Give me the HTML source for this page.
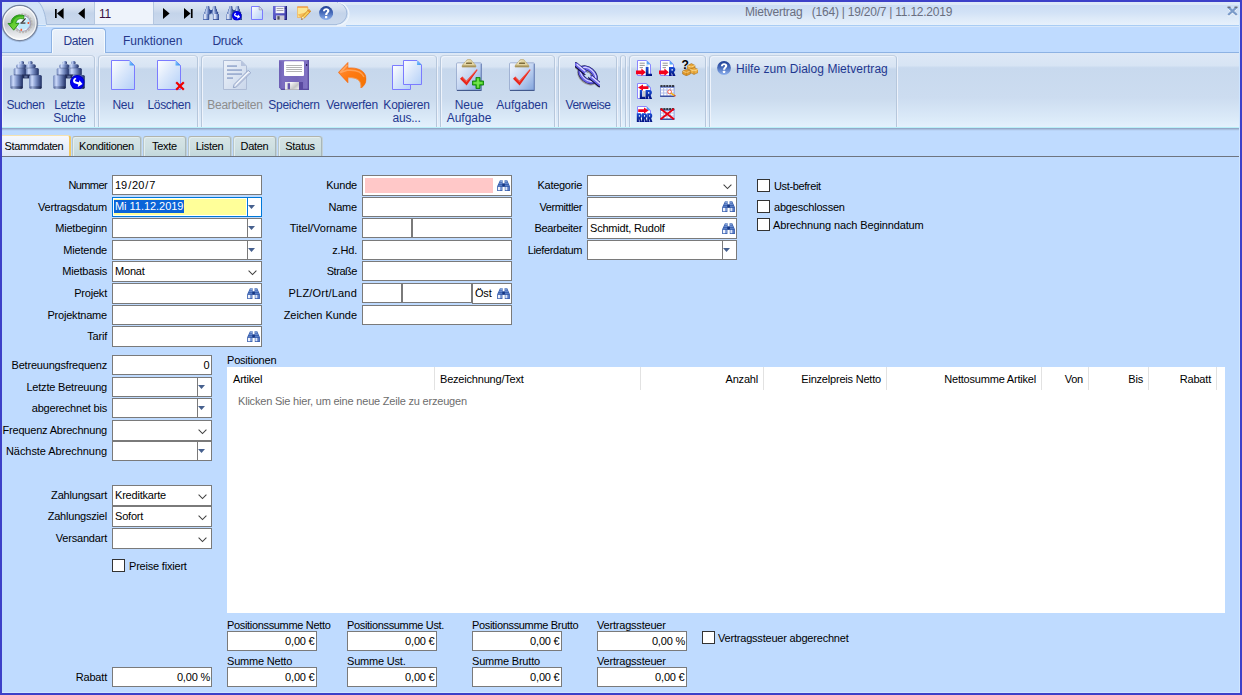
<!DOCTYPE html><html><head><meta charset="utf-8"><title>Mietvertrag</title><style>
*{box-sizing:border-box;margin:0;padding:0}
html,body{width:1242px;height:695px;overflow:hidden;background:#bfdbff}
body{font-family:"Liberation Sans",sans-serif;font-size:11px;color:#000;position:relative}
.a{position:absolute}
.t{position:absolute;white-space:nowrap;line-height:14px;height:14px;letter-spacing:-0.2px}
.r{text-align:right}
.c{text-align:center}
/* window frame */
#frame{left:0;top:0;width:1242px;height:695px;border:2px solid #3c40c8;z-index:50;pointer-events:none}
#frame2{left:2px;top:2px;width:1238px;height:691px;border:1px solid #cfe6ff;border-top:none;border-left:none;z-index:49}
/* title */
#title{left:2px;top:2px;width:1238px;height:23px;background:linear-gradient(#dde9f7 0,#dce8f7 12%,#cbddf4 14%,#d2e2f6 45%,#dfebf9 75%,#e7f1fc 100%)}
#titleline{left:2px;top:25px;width:1238px;height:2px;background:linear-gradient(#a9cdf4 0,#a9cdf4 50%,#d8e8fb 50%)}
.tt{font-size:12px;color:#6a6f80;letter-spacing:-0.23px}
/* ribbon tabs */
.rtab{font-size:12px;color:#25388a;line-height:16px;height:16px}
#tabact{left:51px;top:28px;width:55px;height:25px;border:1px solid #8db2e3;border-bottom:none;border-radius:4px 4px 0 0;background:linear-gradient(#eaf1fa,#e4edf8 50%,#dfe8f5);box-shadow:inset 1px 1px 0 #f4fafe, inset -1px 0 0 #f4fafe}
/* ribbon */
#ribbon{left:2px;top:52px;width:1238px;height:75px;background:linear-gradient(#dde8f6 0,#d7e4f4 17%,#c8d9ee 20%,#ccdcf0 60%,#dcebf9 90%,#e4f1fd 100%);border-top:1px solid #8db2e3}
#ribbot{left:2px;top:127px;width:1238px;height:4px;background:linear-gradient(#b9f0f8 0,#b9f0f8 25%,#94a8c8 25%,#94a8c8 50%,#a9bfe0 50%,#a9bfe0 75%,#b9d4f7 75%)}
.grp{position:absolute;top:55px;height:72px;border:1px solid #b6c7dc;border-top-color:#c3d1e2;border-bottom:none;border-radius:4px 4px 0 0;background:linear-gradient(#e0eaf6 0,#d8e4f3 15%,#c6d7ec 18.5%,#cbdbee 60%,#dbeaf8 88%,#e3f1fd 100%);box-shadow:inset 1px 1px 0 #eef3fb, 1px 0 0 #edf2fb}
.rl{font-size:12px;color:#1f3890;line-height:13px;text-align:center;position:absolute;white-space:nowrap}
.rl.dis{color:#8d8d8d}
/* page tabs */
.ptab{position:absolute;top:136px;height:20px;border:1px solid #a9b7b9;border-top-color:#b2b4ac;border-left-color:#b8c6c8;border-bottom:none;border-radius:3px 3px 0 0;background:linear-gradient(#d6e4e6,#cfe0e2 50%,#c3d8dc);font-size:11px;line-height:19px;text-align:center;letter-spacing:-0.3px;box-shadow:inset 1px 1px 0 #e3eeee, 1px 0 0 #c2d0d6}
.ptab.act{top:135px;height:21px;text-align:left;padding-left:2.6px;letter-spacing:-0.36px;background:linear-gradient(#f6f8fd,#eaf0fb 50%,#dde7f8);border:none;border-top:1px solid #f6e2b0;border-right:2px solid #f3c860;border-radius:0 3px 0 0;line-height:21px;z-index:3;box-shadow:none}
#pline{left:2px;top:156px;width:1238px;height:1px;background:#6e7580}
/* form */
.f{position:absolute;background:#fff;border:1px solid #7a7a7a}
.f.foc{border-color:#0078d7}
.f.foc .dd{background:#0078d7}
.dd{position:absolute;top:0;bottom:0;width:1px;background:#7a7a7a}
.cb{position:absolute;width:13px;height:13px;background:#fff;border:1px solid #333}
.gh{position:absolute;top:367px;height:23px;width:1px;background:#e2e2e2}
</style></head><body>

<svg width="0" height="0" style="position:absolute">
<defs>
 <linearGradient id="gSteel" x1="0" x2="1" y1="0" y2="0">
  <stop offset="0" stop-color="#6c82b6"/><stop offset="0.23" stop-color="#cddbfb"/><stop offset="0.52" stop-color="#8398cc"/><stop offset="0.85" stop-color="#3b4d84"/><stop offset="1" stop-color="#1d2c5e"/>
 </linearGradient>
 <linearGradient id="gSteelD" x1="0" x2="1" y1="0" y2="0">
  <stop offset="0" stop-color="#5b6c98"/><stop offset="0.25" stop-color="#93a5cf"/><stop offset="0.6" stop-color="#4d5e8c"/><stop offset="1" stop-color="#16224a"/>
 </linearGradient>
 <linearGradient id="gDoc" x1="0" x2="1" y1="0" y2="1">
  <stop offset="0" stop-color="#ffffff"/><stop offset="0.45" stop-color="#dbe8fb"/><stop offset="1" stop-color="#b3d0f8"/>
 </linearGradient>
 <linearGradient id="gDocD" x1="0" x2="1" y1="0" y2="1">
  <stop offset="0" stop-color="#eef3fa"/><stop offset="1" stop-color="#c9d6ea"/>
 </linearGradient>
 <linearGradient id="gFold" x1="0" x2="1" y1="0" y2="1">
  <stop offset="0" stop-color="#8fd0ff"/><stop offset="1" stop-color="#2f8cf0"/>
 </linearGradient>
 <linearGradient id="gClip" x1="0" x2="1" y1="0" y2="1">
  <stop offset="0" stop-color="#f4f7fd"/><stop offset="0.5" stop-color="#c3d5f2"/><stop offset="1" stop-color="#7fa2dc"/>
 </linearGradient>
 <linearGradient id="gOrange" x1="0" x2="1" y1="0" y2="1">
  <stop offset="0" stop-color="#ff9448"/><stop offset="0.45" stop-color="#ff7a12"/><stop offset="1" stop-color="#f27400"/>
 </linearGradient>
 <linearGradient id="gHelp" x1="0" x2="0" y1="0" y2="1">
  <stop offset="0" stop-color="#1f3f94"/><stop offset="0.45" stop-color="#4468b8"/><stop offset="1" stop-color="#8fb2ee"/>
 </linearGradient>
 <linearGradient id="gSteelS" x1="0" x2="1" y1="0" y2="0">
  <stop offset="0" stop-color="#5e7cba"/><stop offset="0.3" stop-color="#f4f6ff"/><stop offset="0.62" stop-color="#8aa2d6"/><stop offset="1" stop-color="#274088"/>
 </linearGradient>
 <linearGradient id="gSteelM" x1="0" x2="1" y1="0" y2="0">
  <stop offset="0" stop-color="#4f6cae"/><stop offset="0.3" stop-color="#c6d4f2"/><stop offset="0.6" stop-color="#6a84c0"/><stop offset="1" stop-color="#233a80"/>
 </linearGradient>
 <linearGradient id="gLet" x1="0" x2="0" y1="0" y2="1">
  <stop offset="0" stop-color="#1a50d8"/><stop offset="1" stop-color="#00107a"/>
 </linearGradient>
 <linearGradient id="gFlopL" x1="0" x2="1" y1="0" y2="0">
  <stop offset="0" stop-color="#6d5eb4"/><stop offset="0.12" stop-color="#7c6ec0"/><stop offset="0.6" stop-color="#7667ba"/><stop offset="1" stop-color="#8476c6"/>
 </linearGradient>
 <linearGradient id="gShut" x1="0" x2="1" y1="0" y2="1">
  <stop offset="0" stop-color="#ffffff"/><stop offset="0.6" stop-color="#c4c4c6"/><stop offset="1" stop-color="#f4f4f4"/>
 </linearGradient>
 <linearGradient id="gFlop" x1="0" x2="1" y1="0" y2="1">
  <stop offset="0" stop-color="#6a6ad8"/><stop offset="1" stop-color="#3c3caa"/>
 </linearGradient>
 <linearGradient id="gOrb" x1="0" x2="0" y1="0" y2="1">
  <stop offset="0" stop-color="#f6f7f9"/><stop offset="0.35" stop-color="#d6dade"/><stop offset="0.55" stop-color="#c2c6cc"/><stop offset="0.8" stop-color="#e2e4e7"/><stop offset="1" stop-color="#fbfbfb"/>
 </linearGradient>
 <linearGradient id="gGreen" x1="0" x2="1" y1="0" y2="1">
  <stop offset="0" stop-color="#35b21a"/><stop offset="0.6" stop-color="#6fd43a"/><stop offset="1" stop-color="#2a9a10"/>
 </linearGradient>

 <!-- big binoculars 32x32 -->
 <symbol id="binoL" viewBox="0 0 32 32">
  <rect x="9.6" y="2.9" width="4.4" height="3.6" rx="1.6" fill="url(#gSteel)"/>
  <rect x="18" y="2.9" width="4.6" height="3.6" rx="1.6" fill="url(#gSteel)"/>
  <rect x="6.2" y="6.2" width="10" height="4.2" rx="1.8" fill="url(#gSteel)"/>
  <rect x="15.8" y="6.2" width="10" height="4.2" rx="1.8" fill="url(#gSteel)"/>
  <rect x="3.7" y="10" width="12.6" height="7.6" rx="1.5" fill="url(#gSteel)"/>
  <rect x="15.8" y="10" width="13" height="7.6" rx="1.5" fill="url(#gSteel)"/>
  <rect x="12" y="16.6" width="8" height="3.8" fill="#1e2a55"/>
  <rect x="14.3" y="17.6" width="3.2" height="2.2" fill="#5c6c98"/>
  <rect x="0.2" y="17.1" width="12.7" height="13.6" rx="1.5" fill="url(#gSteel)"/>
  <rect x="19.1" y="17.1" width="12.7" height="13.6" rx="1.5" fill="url(#gSteel)"/>
  <rect x="0.8" y="28.2" width="11.6" height="2.6" rx="1" fill="url(#gSteelD)"/>
  <rect x="19.7" y="28.2" width="11.6" height="2.6" rx="1" fill="url(#gSteelD)"/>
  <rect x="3.7" y="16.4" width="25" height="1" fill="#33426f" opacity="0.55"/>
  <rect x="6.4" y="9.6" width="19.4" height="0.9" fill="#33426f" opacity="0.45"/>
 </symbol>
 <!-- blue round arrow badge 10x10 -->
 <symbol id="badge" viewBox="0 0 14 14">
  <circle cx="7" cy="7" r="6.9" fill="#0000f4"/><circle cx="7" cy="7" r="6.5" fill="none" stroke="#00008c" stroke-width="0.8" opacity="0.7"/>
  <path d="M5.2 2.6C2.6 3.4 2.2 6.6 4.4 8L8 9.2L7.4 11.4L12 8.6L9 5L8.6 7L5.6 6.2C4.4 5.6 4.6 4.2 6.2 3.8Z" fill="#fff"/>
 </symbol>
 <!-- small binoculars 16x16 -->
 <symbol id="bino16" viewBox="0 0 16 14">
  <rect x="3.1" y="0" width="3.3" height="3.6" rx="0.9" fill="url(#gSteelM)"/>
  <rect x="9.8" y="0" width="3.3" height="3.6" rx="0.9" fill="url(#gSteelM)"/>
  <rect x="2.2" y="2.8" width="4.9" height="3.2" rx="0.8" fill="url(#gSteelM)"/>
  <rect x="9.1" y="2.8" width="4.9" height="3.2" rx="0.8" fill="url(#gSteelM)"/>
  <rect x="6.8" y="4" width="2.6" height="3.4" fill="#2e4a94"/>
  <rect x="1.3" y="5.4" width="6.3" height="3.2" rx="0.8" fill="url(#gSteelM)"/>
  <rect x="8.8" y="5.4" width="6.3" height="3.2" rx="0.8" fill="url(#gSteelM)"/>
  <rect x="0" y="8" width="6.2" height="6" rx="0.7" fill="url(#gSteelS)"/>
  <rect x="9.9" y="8" width="6.2" height="6" rx="0.7" fill="url(#gSteelS)"/>
  <rect x="0.2" y="13" width="5.8" height="1" fill="#3b59a6" opacity="0.8"/><rect x="10.1" y="13" width="5.8" height="1" fill="#2a4590" opacity="0.8"/>
 </symbol>
 <!-- tiny field binoculars 13x11 -->
 <symbol id="binoS" viewBox="0 0 13 11">
  <path d="M3 0.2H5.6V3.4H7.6V0.2H10.2L12.9 6.2V10.9H7.8V6.8H5.4V10.9H0.2V6.2Z" fill="#2f57a8"/>
  <rect x="3.2" y="0.4" width="2.2" height="1.4" fill="#9fb9e6"/><rect x="7.9" y="0.4" width="2.2" height="1.4" fill="#86a4da"/>
  <path d="M2.6 2.6H5.2V3.8H2.1ZM7.9 2.6H10.6L11.1 3.8H7.9Z" fill="#7f9fdc"/>
  <path d="M1.7 4.8H5.2V5.8H1.2ZM7.9 4.8H11.5L12 5.8H7.9Z" fill="#6a8cd0"/>
  <rect x="5.5" y="3.6" width="2.2" height="3" fill="#173680"/>
  <rect x="0.9" y="6.8" width="4" height="3.5" fill="#7f9cd6"/><rect x="8.3" y="6.8" width="4" height="3.5" fill="#5c7cc4"/>
  <rect x="1" y="6.9" width="2.1" height="3.3" fill="#eef2fc"/><rect x="8.4" y="6.9" width="1.9" height="3.3" fill="#dde6f8"/>
 </symbol>
 <!-- document 24x30 -->
 <symbol id="doc" viewBox="0 0 24 30">
  <path d="M0.5 0.5H18.5L23.5 5.5V29.5H0.5Z" fill="url(#gDoc)" stroke="#7b7bff" stroke-width="1"/>
  <path d="M18.5 0.5L23.5 5.5H18.5Z" fill="url(#gFold)"/>
 </symbol>
 <symbol id="doc16" viewBox="0 0 12 14">
  <path d="M0.5 0.5H8.2L11.5 3.8V13.5H0.5Z" fill="url(#gDoc)" stroke="#7b7bff" stroke-width="1"/>
  <path d="M8.2 0.5V3.8H11.5Z" fill="#e8eefa" stroke="#8e8ea8" stroke-width="0.7"/>
 </symbol>
 <symbol id="redx" viewBox="0 0 10 10">
  <path d="M1.2 1.2L8.8 8.8M8.8 1.2L1.2 8.8" stroke="#f00000" stroke-width="2.2" stroke-linecap="butt"/>
 </symbol>
 <!-- edit (disabled) 28x30 -->
 <symbol id="edit" viewBox="0 0 28 30">
  <path d="M0.5 0.5H18L23.5 6V29.5H0.5Z" fill="url(#gDocD)" stroke="#aebcd6" stroke-width="1"/>
  <path d="M18 0.5V6H23.5Z" fill="#b7c4de"/>
  <rect x="4" y="5.2" width="10" height="1.8" fill="#9fb0d2"/><rect x="4" y="9.2" width="15" height="1.8" fill="#9fb0d2"/>
  <rect x="4" y="13.2" width="15" height="1.8" fill="#9fb0d2"/><rect x="4" y="17.2" width="6" height="1.8" fill="#9fb0d2"/>
  <path d="M25.2 10.4L27.6 12.8L13.6 26.8L10.4 27.6L11.2 24.4Z" fill="#eef2f9" stroke="#8e9fc4" stroke-width="1"/>
  <path d="M12.4 24.6L13.4 25.6L25.8 13.2" fill="none" stroke="#b9c6e0" stroke-width="0.9"/>
 </symbol>
 <!-- floppy 30x30 -->
 <symbol id="floppy" viewBox="0 0 30 30">
  <path d="M0 0H30V30H2.5L0 27.5Z" fill="url(#gFlopL)"/>
  <path d="M0 0H30V1.2H0Z" fill="#8a7cc8"/><path d="M28.6 0H30V30H28.6Z" fill="#5e4fa4"/><path d="M1 28.8H30V30H2.5Z" fill="#594a9e"/>
  <rect x="5" y="1.2" width="20" height="14.8" rx="1" fill="#fff"/>
  <rect x="7.2" y="5" width="15.8" height="1" fill="#b4b4b4"/><rect x="7.2" y="7" width="15.8" height="1" fill="#b4b4b4"/>
  <rect x="7.2" y="9" width="15.8" height="1" fill="#b4b4b4"/><rect x="7.2" y="11" width="15.8" height="1" fill="#b4b4b4"/>
  <rect x="27" y="4" width="1.2" height="2" fill="#2a2060"/>
  <rect x="6" y="22" width="18" height="8" fill="#5a4aa0"/>
  <rect x="6" y="22" width="14" height="8" fill="#e9e9ec"/><rect x="8.6" y="23.2" width="2.6" height="6.8" fill="#6454ac"/>
  <path d="M11.2 22H20V29.4H11.2Z" fill="url(#gShut)"/><rect x="6" y="29.2" width="14" height="0.8" fill="#b0b0b4"/>
 </symbol>
 <symbol id="floppy16" viewBox="0 0 14 14">
  <path d="M0 0H14V14H1.2L0 12.8Z" fill="url(#gFlop)"/>
  <path d="M12.8 0H14V14H12.8Z" fill="#24247e"/><path d="M0.6 13H14V14H1.2Z" fill="#24247e"/>
  <rect x="2.6" y="0.6" width="8.8" height="6.6" fill="#f4f4fa"/>
  <rect x="3.6" y="2" width="6.8" height="0.9" fill="#9a9aa8"/><rect x="3.6" y="4" width="6.8" height="0.9" fill="#9a9aa8"/>
  <rect x="3" y="9.4" width="8.4" height="4.6" fill="#c8c8d4"/><rect x="4.4" y="10.2" width="2.2" height="3.4" fill="#4a4a58"/>
  <rect x="11.8" y="1.6" width="0.8" height="1.4" fill="#1a1a60"/>
 </symbol>
 <!-- undo 30x28 -->
 <symbol id="undo" viewBox="0 0 30 28">
  <path d="M10.4 0.5V6.4C20 5.4 29.6 9 29.6 18C29.6 22.4 27 25.6 24 27.8C25 21.6 22.6 15.8 10.4 16.4V21.8L0.4 11Z" fill="url(#gOrange)" stroke="#f4650a" stroke-width="0.7" stroke-linejoin="round"/>
  <path d="M10 3.2L2.4 11.2L9.6 8.8C18 8 25 10.4 27.4 15.6" fill="none" stroke="#ffc08a" stroke-width="1.6" opacity="0.55"/>
  <path d="M10.4 16.4C22.6 15.8 25 21.6 24 27.8" fill="none" stroke="#f8b070" stroke-width="0.9" opacity="0.7"/>
 </symbol>
 <!-- copy 30x30 -->
 <symbol id="copy" viewBox="0 0 30 30">
  <path d="M0.5 5.5H18.5V29.5H0.5Z" fill="url(#gDoc)" stroke="#7b7bff" stroke-width="1"/>
  <path d="M11.5 0.5H25L29.5 5V24.5H11.5Z" fill="url(#gDoc)" stroke="#7b7bff" stroke-width="1"/>
  <path d="M25 0.5L29.5 5H25Z" fill="url(#gFold)"/>
 </symbol>
 <!-- clipboard check 26x32 -->
 <symbol id="clip" viewBox="0 0 26 32">
  <rect x="0.5" y="3.8" width="25" height="28" rx="1.2" fill="url(#gClip)" stroke="#93a6ca" stroke-width="0.8"/>
  <path d="M1 31.4H25.4" stroke="#3f5588" stroke-width="1.1"/><path d="M25.2 5V31.4" stroke="#5d77b0" stroke-width="0.9"/>
  <path d="M6 8C6 5.4 8.8 3.8 9.8 2.4C10.6 1 11.4 0.3 13 0.3C14.6 0.3 15.4 1 16.2 2.4C17.2 3.8 20 5.4 20 8Z" fill="#e2d4a2" stroke="#b09c62" stroke-width="0.6"/>
  <path d="M8.2 4.6C9.6 3.6 10.4 1.6 13 1.4C11.6 2.4 10.4 4.2 8.2 4.6Z" fill="#f6eed2"/>
  <rect x="10" y="3.4" width="6" height="1.5" rx="0.5" fill="#7d6c3c"/>
  <rect x="6.2" y="6.4" width="13.6" height="1.7" fill="#a8945a"/>
  <path d="M4 19.8L6.4 17.6L10.4 21.8L20.8 10.2L21.6 11L10.6 26.4Z" fill="#e8251c"/>
  <path d="M6.2 18.4L10.4 22.8L20.6 10.8" fill="none" stroke="#ff8a78" stroke-width="0.7" opacity="0.8"/>
 </symbol>
 <symbol id="plus" viewBox="0 0 12 12">
  <path d="M4 0.4H8V4H11.6V8H8V11.6H4V8H0.4V4H4Z" fill="#3cc41e" stroke="#0c7e08" stroke-width="0.9"/>
  <path d="M5.2 1.6H6.8V5.2H10.4V6.8H6.8V10.4H5.2V6.8H1.6V5.2H5.2Z" fill="#84ec5c" opacity="0.85"/>
 </symbol>
 <!-- chain 26x26 -->
 <symbol id="chain" viewBox="0 0 26 26">
  <g transform="rotate(40 13 13)">
   <g transform="translate(0.4 1.4)" opacity="0.5" fill="none" stroke="#6a5a48">
    <ellipse cx="13" cy="13" rx="9" ry="5.6" stroke-width="4.6"/>
    <path d="M-3 13H9M17 13H29" stroke-width="3.6" stroke-linecap="round"/>
   </g>
   <ellipse cx="13" cy="13" rx="9" ry="5.6" fill="none" stroke="#15155a" stroke-width="4.8"/>
   <ellipse cx="13" cy="13" rx="9" ry="5.6" fill="none" stroke="#6a64e6" stroke-width="3.6"/>
   <ellipse cx="13" cy="12.5" rx="9" ry="5.6" fill="none" stroke="#d6d4ff" stroke-width="1.2"/>
   <path d="M-3 13H9" stroke="#0c0c40" stroke-width="5" stroke-linecap="round"/>
   <path d="M-3 12.6H9" stroke="#6a64e6" stroke-width="3.6" stroke-linecap="round"/>
   <path d="M-2.6 12H8.6" stroke="#e0deff" stroke-width="1.3"/>
   <path d="M17 13H29" stroke="#0c0c40" stroke-width="5" stroke-linecap="round"/>
   <path d="M17 12.6H29" stroke="#6a64e6" stroke-width="3.6" stroke-linecap="round"/>
   <path d="M17.4 12H28.6" stroke="#e0deff" stroke-width="1.3"/>
   <path d="M9.6 13H16.4" stroke="#c9dcf2" stroke-width="2.4"/>
  </g>
 </symbol>
 <!-- help 14x14 -->
 <symbol id="help" viewBox="0 0 14 14">
  <circle cx="7" cy="7" r="6.9" fill="url(#gHelp)"/>
  <path d="M3.9 5.2C3.9 3.2 5.4 2.2 7.1 2.2C8.9 2.2 10.3 3.2 10.3 4.8C10.3 6.8 8.2 7 8.1 8.8H6C6 6.6 8 6.2 8 5C8 4.4 7.6 4 7 4C6.4 4 6 4.4 5.9 5.2Z" fill="#fff"/>
  <rect x="5.9" y="9.8" width="2.3" height="2.2" rx="0.4" fill="#fff"/>
 </symbol>
 <!-- note + pencil 14x14 -->
 <symbol id="note" viewBox="0 0 14 14">
  <path d="M0.3 1H10.8V8.2L6.6 11.4H0.3Z" fill="#fbe694" stroke="#f0a848" stroke-width="0.7"/>
  <path d="M0.3 1H10.8" stroke="#f08a30" stroke-width="1"/>
  <path d="M0.6 8.6L3.4 11.2H6.6L10.6 8.2V6Z" fill="#f4b44e" opacity="0.85"/>
  <path d="M11.8 3.4L13.8 5.2L7.2 12.2L4.4 13.6L5.2 10.6Z" fill="#f6cf5a" stroke="#c47a18" stroke-width="0.7"/>
  <path d="M11 4.4L13 6.2" stroke="#e8842a" stroke-width="1.2"/>
  <path d="M4.4 13.6L5.2 10.6L7.2 12.2Z" fill="#f8ead0"/><path d="M4.4 13.6L4.9 12.2L5.8 12.9Z" fill="#222"/>
 </symbol>
 <!-- small ribbon icons -->
 <symbol id="docL" viewBox="0 0 17 16">
  <path d="M1.5 0.5H10.6L14.5 4.4V15.5H1.5Z" fill="#fff" stroke="#8a86ff" stroke-width="1"/>
  <path d="M10.6 0.5L14.5 4.4H10.6Z" fill="#58a8f4"/>
  <path d="M3.6 3.2H8.8M3.6 5.4H8.8M3.6 7.6H7" stroke="#8a8a8a" stroke-width="0.9"/>
  <path d="M11 5V15" stroke="#d6e6fa" stroke-width="2.4"/>
  <path d="M0 10.4H5.4V8.6L9.8 12.3L5.4 16V14.2H0Z" fill="#f4001c"/>
  <path transform="translate(9.8 7)" d="M0 0H2.7V6.7H6.2V9H0Z" fill="url(#gLet)"/>
 </symbol>
 <symbol id="docR1" viewBox="0 0 17 16">
  <path d="M1.5 0.5H10.6L14.5 4.4V15.5H1.5Z" fill="#fff" stroke="#8a86ff" stroke-width="1"/>
  <path d="M10.6 0.5L14.5 4.4H10.6Z" fill="#58a8f4"/>
  <path d="M3.6 3.2H8.8M3.6 5.4H8.8M3.6 7.6H7" stroke="#8a8a8a" stroke-width="0.9"/>
  <path d="M0 10.4H5.4V8.6L9.8 12.3L5.4 16V14.2H0Z" fill="#f4001c"/>
  <path transform="translate(10 7)" fill-rule="evenodd" d="M0 0H4.1C5.6 0 6.3 1 6.3 2.5C6.3 3.7 5.8 4.5 4.9 4.9L6.5 9H3.9L2.6 5.4V9H0ZM2.6 1.9V3.7H3.3C4 3.7 4 1.9 3.3 1.9Z" fill="url(#gLet)"/>
 </symbol>
 <symbol id="docR" viewBox="0 0 17 16">
  <path d="M1.5 0.5H10.6L14.5 4.4V15.5H1.5Z" fill="#fff" stroke="#8a86ff" stroke-width="1"/>
  <path d="M10.6 0.5L14.5 4.4H10.6Z" fill="#58a8f4"/>
  <path d="M7 9H10M7 11H10M7 13H10" stroke="#8a8a8a" stroke-width="0.9"/>
  <path d="M12.4 3.2H7V1.4L2 4.6L7 7.8V6H12.4Z" fill="#f4001c"/>
  <path transform="translate(3.8 7) scale(0.9 1)" d="M0 0H2.7V6.7H6.2V9H0Z" fill="url(#gLet)"/>
  <path transform="translate(9.6 7)" fill-rule="evenodd" d="M0 0H4.1C5.6 0 6.3 1 6.3 2.5C6.3 3.7 5.8 4.5 4.9 4.9L6.5 9H3.9L2.6 5.4V9H0ZM2.6 1.9V3.7H3.3C4 3.7 4 1.9 3.3 1.9Z" fill="url(#gLet)"/>
 </symbol>
 <symbol id="docRRR" viewBox="0 0 17 16">
  <path d="M1.5 0.5H10.6L14.5 4.4V15.5H1.5Z" fill="#fff" stroke="#8a86ff" stroke-width="1"/>
  <path d="M10.6 0.5L14.5 4.4H10.6Z" fill="#58a8f4"/>
  <path d="M2.2 3.2H8V1.6L12.6 4.6L8 7.6V6H2.2Z" fill="#f4001c"/>
  <path transform="translate(0.8 7.2) scale(0.8 0.98)" fill-rule="evenodd" d="M0 0H4.1C5.6 0 6.3 1 6.3 2.5C6.3 3.7 5.8 4.5 4.9 4.9L6.5 9H3.9L2.6 5.4V9H0ZM2.6 1.9V3.7H3.3C4 3.7 4 1.9 3.3 1.9Z" fill="url(#gLet)"/>
  <path transform="translate(6 7.2) scale(0.8 0.98)" fill-rule="evenodd" d="M0 0H4.1C5.6 0 6.3 1 6.3 2.5C6.3 3.7 5.8 4.5 4.9 4.9L6.5 9H3.9L2.6 5.4V9H0ZM2.6 1.9V3.7H3.3C4 3.7 4 1.9 3.3 1.9Z" fill="url(#gLet)"/>
  <path transform="translate(11.2 7.2) scale(0.8 0.98)" fill-rule="evenodd" d="M0 0H4.1C5.6 0 6.3 1 6.3 2.5C6.3 3.7 5.8 4.5 4.9 4.9L6.5 9H3.9L2.6 5.4V9H0ZM2.6 1.9V3.7H3.3C4 3.7 4 1.9 3.3 1.9Z" fill="url(#gLet)"/>
 </symbol>
 <symbol id="cal" viewBox="0 0 15 12">
  <rect x="0.5" y="1.6" width="13.6" height="9.6" fill="#fff" stroke="#8ea0dc" stroke-width="1"/>
  <path d="M0.4 1H14.2" stroke="#0a0a0a" stroke-width="1.3" stroke-dasharray="2.2 0.7"/>
  <path d="M0.4 2.4H14.2" stroke="#4a64c0" stroke-width="0.8"/>
  <path d="M0.5 5H14M0.5 8H14M3.7 2.4V11M7 2.4V11M10.3 2.4V11" stroke="#a8b6e6" stroke-width="0.9"/>
  <path d="M0.2 11.2H14.4" stroke="#1a2e8a" stroke-width="1.1"/>
 </symbol>
 <symbol id="boxes" viewBox="0 0 16 16">
  <path d="M5.4 5.6L9.4 3.6L13 5.4V9L9 10.8L5.4 9Z" fill="#e9a838" stroke="#9a6010" stroke-width="0.5"/>
  <path d="M5.4 5.6L9 7.2L13 5.4" fill="none" stroke="#fbe0a0" stroke-width="0.8"/><path d="M9 7.2V10.8" stroke="#b87818" stroke-width="0.6"/>
  <path d="M0.6 11L4.6 9.2L8.4 11V14L4.4 15.8L0.6 14Z" fill="#e29a2c" stroke="#9a6010" stroke-width="0.5"/>
  <path d="M0.6 11L4.4 12.6L8.4 11" fill="none" stroke="#f8d890" stroke-width="0.8"/><path d="M4.4 12.6V15.8" stroke="#b87818" stroke-width="0.6"/>
  <path d="M8.2 9.4L12.2 7.6L16 9.4V12.6L12 14.4L8.2 12.6Z" fill="#eeb044" stroke="#9a6010" stroke-width="0.5"/>
  <path d="M8.2 9.4L12 11L16 9.4" fill="none" stroke="#fbe0a0" stroke-width="0.8"/><path d="M12 11V14.4" stroke="#b87818" stroke-width="0.6"/>
 </symbol>
</defs>
</svg>

<div class="a" id="title"></div><div class="a" id="titleline"></div>
<svg class="a" style="left:0;top:0" width="360" height="30" viewBox="0 0 360 30">
<defs><linearGradient id="gQat" x1="0" x2="0" y1="0" y2="1"><stop offset="0" stop-color="#e1e9f5"/><stop offset="0.35" stop-color="#cfdcee"/><stop offset="0.5" stop-color="#c4d4ea"/><stop offset="1" stop-color="#cbdaee"/></linearGradient></defs>
<rect x="46" y="25" width="300" height="2" fill="#e4eefa"/>
<path d="M2 2H39C43 6 45.5 15 46.8 24.6H2Z" fill="#d2e3f8"/>
<path d="M38.6 2C43 6.5 45.5 15 46.6 24.6H336A11.3 11.3 0 0 0 336 2Z" fill="url(#gQat)"/>
<path d="M38.6 2C43 6.5 45.5 15 46.6 24.6H336A11.3 11.3 0 0 0 337 2.1" fill="none" stroke="#a3bbdc" stroke-width="1"/>
<path d="M338 2.6A11 11 0 0 1 337 25.4" fill="none" stroke="#f2f7fd" stroke-width="1.2" opacity="0.9"/>
<rect x="94.5" y="2" width="59" height="22.2" fill="#eef3fb"/>
<path d="M94.5 2V24M153.5 2V24" stroke="#b5c7e0" stroke-width="1"/>
</svg>
<div class="t tt" style="left:745px;top:5px">Mietvertrag&nbsp;&nbsp; (164) | 19/20/7 | 11.12.2019</div>
<div class="t" style="left:99px;top:7px;font-size:12px;color:#3a1040">11</div>
<div class="t rtab" style="left:123px;top:33px;letter-spacing:0px">Funktionen</div>
<div class="t rtab" style="left:212.5px;top:33px;letter-spacing:-0.3px">Druck</div>
<div class="a" id="ribbon"></div>
<div class="grp" style="left:2px;width:93px;border-left:none;border-radius:0 4px 0 0;"></div>
<div class="grp" style="left:98px;width:100px;"></div>
<div class="grp" style="left:201px;width:236px;"></div>
<div class="grp" style="left:440px;width:115px;"></div>
<div class="grp" style="left:558px;width:59px;"></div>
<div class="grp" style="left:620px;width:6px;"></div>
<div class="grp" style="left:629px;width:77px;"></div>
<div class="grp" style="left:709px;width:188px;"></div>
<div class="a" id="ribbot"></div>
<div class="a" id="tabact"></div>
<div class="t rtab" style="left:63.5px;top:33px;letter-spacing:-0.4px">Daten</div>
<div class="rl" style="left:25.5px;top:99.3px;width:100px;margin-left:-50px;letter-spacing:-0.45px;">Suchen</div>
<div class="rl" style="left:69.5px;top:99.3px;width:100px;margin-left:-50px;letter-spacing:-0.35px;">Letzte<br>Suche</div>
<div class="rl" style="left:123px;top:99.3px;width:100px;margin-left:-50px;letter-spacing:-0.3px;">Neu</div>
<div class="rl" style="left:169px;top:99.3px;width:100px;margin-left:-50px;letter-spacing:-0.32px;">L&ouml;schen</div>
<div class="rl dis" style="left:235px;top:99.3px;width:100px;margin-left:-50px;letter-spacing:-0.27px;">Bearbeiten</div>
<div class="rl" style="left:294px;top:99.3px;width:100px;margin-left:-50px;letter-spacing:-0.3px;">Speichern</div>
<div class="rl" style="left:352px;top:99.3px;width:100px;margin-left:-50px;letter-spacing:-0.27px;">Verwerfen</div>
<div class="rl" style="left:406.5px;top:99.3px;width:100px;margin-left:-50px;letter-spacing:-0.22px;">Kopieren<br>aus...</div>
<div class="rl" style="left:469px;top:99.3px;width:100px;margin-left:-50px;letter-spacing:0px;">Neue<br>Aufgabe</div>
<div class="rl" style="left:522px;top:99.3px;width:100px;margin-left:-50px;letter-spacing:0px;">Aufgaben</div>
<div class="rl" style="left:588px;top:99.3px;width:100px;margin-left:-50px;letter-spacing:-0.47px;">Verweise</div>
<div class="rl" style="left:736px;top:62.5px;text-align:left;letter-spacing:0.04px">Hilfe zum Dialog Mietvertrag</div>
<svg class="a" style="left:0px;top:3px" width="40" height="40" viewBox="0 0 40 40">
 <circle cx="19.8" cy="20.6" r="18.6" fill="#5f6f8c" opacity="0.28"/>
 <circle cx="19.7" cy="20" r="17.6" fill="url(#gOrb)" stroke="#76849e" stroke-width="1.2"/>
 <circle cx="19.7" cy="20" r="16.2" fill="none" stroke="#fff" stroke-width="1.1" opacity="0.8"/>
 <circle cx="22.6" cy="20.3" r="9.2" fill="none" stroke="#b4b0a8" stroke-width="1.6" stroke-dasharray="2.2 1" opacity="0.75"/>
 <circle cx="22.8" cy="20.3" r="8" fill="#b8b4d4" stroke="#9a98a8" stroke-width="0.8"/>
 <circle cx="22.8" cy="20.2" r="6.9" fill="#bfe9fb"/>
 <path d="M16.4 18.4A6.9 6.9 0 0 1 27.6 15.2L22.8 20.2Z" fill="#f2fbff"/>
 <path d="M16 21.4A6.9 6.9 0 0 0 27 25.6" fill="none" stroke="#e8f8ff" stroke-width="1.2"/>
 <path d="M21.4 20L25.6 15.4" stroke="#3a3a3a" stroke-width="1.4"/><path d="M20.4 20.1H25.4" stroke="#555" stroke-width="1.5"/>
 <rect x="27.6" y="19" width="1.6" height="2" fill="#f4582e"/><rect x="20.5" y="25.8" width="1.6" height="2" fill="#f4582e"/>
 <path d="M24 12.7C17.6 10.4 11 14 11 20.6L8 20.4L13.7 27.2L19 20.3L15.9 20.5C15.8 17 19 14.6 23.6 16Z" fill="url(#gGreen)" stroke="#138408" stroke-width="0.8"/>
 <path d="M22.6 13.2C17.4 12.2 12.6 15 12.3 20" fill="none" stroke="#0f8a06" stroke-width="1.2" opacity="0.55"/>
</svg>
<svg class="a" style="left:54.8px;top:8px" width="9" height="11" viewBox="0 0 9 11"><path d="M0 1H1.7V10H0ZM8.6 0V11L2 5.5Z" fill="#000"/></svg>
<svg class="a" style="left:77.5px;top:8px" width="7" height="11" viewBox="0 0 7 11"><path d="M6.8 0V11L0.2 5.5Z" fill="#000"/></svg>
<svg class="a" style="left:162.6px;top:8px" width="7" height="11" viewBox="0 0 7 11"><path d="M0 0L6.6 5.5L0 11Z" fill="#000"/></svg>
<svg class="a" style="left:183.8px;top:8px" width="9" height="11" viewBox="0 0 9 11"><path d="M0 0L6.6 5.5L0 11ZM6.9 1H8.6V10H6.9Z" fill="#000"/></svg>
<svg class="a" style="left:203px;top:6px;" width="16" height="14"><use href="#bino16"/></svg>
<svg class="a" style="left:226px;top:6px;" width="16" height="14"><use href="#bino16"/></svg>
<svg class="a" style="left:232px;top:11px;" width="9.6" height="9.6"><use href="#badge"/></svg>
<svg class="a" style="left:251px;top:6px;" width="12" height="14"><use href="#doc16"/></svg>
<svg class="a" style="left:273px;top:6px;" width="14" height="14"><use href="#floppy16"/></svg>
<svg class="a" style="left:296.5px;top:6px;" width="14" height="14"><use href="#note"/></svg>
<svg class="a" style="left:319px;top:5.8px;" width="14.2" height="14.2"><use href="#help"/></svg>
<svg class="a" style="left:1227px;top:6px" width="11" height="11" viewBox="0 0 11 11"><path d="M1.2 2L9.8 10M9.8 2L1.2 10" stroke="#fff" stroke-width="2.2" opacity="0.9"/><path d="M1.2 1.2L9.8 9M9.8 1.2L1.2 9" stroke="#7b9bc9" stroke-width="2.3"/><path d="M0.4 1.2H3.6M7.4 1.2H10.6" stroke="#5e5e62" stroke-width="1"/></svg>
<svg class="a" style="left:10px;top:58px;" width="32" height="32"><use href="#binoL"/></svg>
<svg class="a" style="left:53px;top:58px;" width="32" height="32"><use href="#binoL"/></svg>
<svg class="a" style="left:70.2px;top:74.9px;" width="14.6" height="14.6"><use href="#badge"/></svg>
<svg class="a" style="left:111px;top:60px;" width="24" height="30"><use href="#doc"/></svg>
<svg class="a" style="left:157px;top:60px;" width="24" height="30"><use href="#doc"/></svg>
<svg class="a" style="left:174.6px;top:80.6px;" width="10" height="10"><use href="#redx"/></svg>
<svg class="a" style="left:223px;top:60px;" width="28" height="30"><use href="#edit"/></svg>
<svg class="a" style="left:279px;top:60px;" width="30" height="30"><use href="#floppy"/></svg>
<svg class="a" style="left:338px;top:61.5px;" width="28.5" height="26.6"><use href="#undo"/></svg>
<svg class="a" style="left:392px;top:60px;" width="30" height="30"><use href="#copy"/></svg>
<svg class="a" style="left:456.2px;top:58.7px;" width="26" height="32"><use href="#clip"/></svg>
<svg class="a" style="left:472px;top:77px;" width="12" height="12"><use href="#plus"/></svg>
<svg class="a" style="left:509.2px;top:58.7px;" width="26" height="32"><use href="#clip"/></svg>
<svg class="a" style="left:574.5px;top:62.2px;" width="25.6" height="25.6"><use href="#chain"/></svg>
<svg class="a" style="left:717px;top:61px;" width="14" height="14"><use href="#help"/></svg>
<svg class="a" style="left:636px;top:60px;" width="17" height="16"><use href="#docL"/></svg>
<svg class="a" style="left:659px;top:60px;" width="17" height="16"><use href="#docR1"/></svg>
<svg class="a" style="left:682px;top:60px;" width="16" height="16"><use href="#boxes"/></svg>
<div class="t" style="left:681.4px;top:59px;font-weight:bold;font-size:12px;line-height:12px;height:12px;color:#000;letter-spacing:0">?</div>
<svg class="a" style="left:636px;top:83px;" width="17" height="16"><use href="#docR"/></svg>
<svg class="a" style="left:660px;top:84.6px;" width="15" height="12"><use href="#cal"/></svg>
<svg class="a" style="left:667px;top:88.6px" width="9" height="8" viewBox="0 0 9 8"><circle cx="2.6" cy="2.8" r="1.9" fill="#fff" stroke="#f0503c" stroke-width="0.9"/><path d="M4 4.2L8 7" stroke="#f0b018" stroke-width="1.6"/><path d="M7.2 6.4L8.4 7.2" stroke="#d04040" stroke-width="1.4"/></svg>
<svg class="a" style="left:636px;top:106px;" width="17" height="16"><use href="#docRRR"/></svg>
<svg class="a" style="left:660px;top:107.6px;" width="15" height="12"><use href="#cal"/></svg>
<svg class="a" style="left:660px;top:107.6px" width="15" height="12" viewBox="0 0 15 12"><path d="M0.6 0.8L14 11.2M14 0.8L0.6 11.2" stroke="#e80014" stroke-width="1.9"/></svg>
<div class="ptab act" style="left:2px;width:69px">Stammdaten</div>
<div class="ptab" style="left:72px;width:69px">Konditionen</div>
<div class="ptab" style="left:143px;width:43px">Texte</div>
<div class="ptab" style="left:188px;width:43px">Listen</div>
<div class="ptab" style="left:233px;width:43px">Daten</div>
<div class="ptab" style="left:278px;width:44px">Status</div>
<div class="a" id="pline"></div>
<div class="f " style="left:112px;top:175px;width:150px;height:20px"><div class="t" style="left:2px;top:2px"><span style="letter-spacing:0">19<span style="padding:0 0.9px">/</span>20<span style="padding:0 0.9px">/</span>7</span></div></div>
<div class="t r" style="left:-93px;width:200px;top:178px;letter-spacing:-0.6px;">Nummer</div>
<div class="f foc" style="left:112px;top:197px;width:150px;height:20px"><div class="dd" style="right:13px"></div><svg class="a" style="right:6px;top:7px" width="7" height="4" viewBox="0 0 7 4"><path d="M0 0H7L3.5 4Z" fill="#46608e"/></svg><div class="a" style="left:1px;top:1px;right:15px;bottom:1px;background:#ffff99"></div><div class="t" style="left:2px;top:2px;height:13px;line-height:13px;background:#0a64d8;color:#fff;padding:0 0.5px 0 1px;margin-left:-1px;letter-spacing:-0.04px">Mi 11.12.2019</div></div>
<div class="t r" style="left:-93px;width:200px;top:200px;">Vertragsdatum</div>
<div class="f " style="left:112px;top:218px;width:150px;height:20px"><div class="dd" style="right:13px"></div><svg class="a" style="right:6px;top:7px" width="7" height="4" viewBox="0 0 7 4"><path d="M0 0H7L3.5 4Z" fill="#46608e"/></svg></div>
<div class="t r" style="left:-93px;width:200px;top:221px;">Mietbeginn</div>
<div class="f " style="left:112px;top:240px;width:150px;height:20px"><div class="dd" style="right:13px"></div><svg class="a" style="right:6px;top:7px" width="7" height="4" viewBox="0 0 7 4"><path d="M0 0H7L3.5 4Z" fill="#46608e"/></svg></div>
<div class="t r" style="left:-93px;width:200px;top:243px;">Mietende</div>
<div class="f " style="left:112px;top:261px;width:150px;height:21px"><div class="t" style="left:2px;top:2px">Monat</div><svg class="a" style="right:3.6px;top:7.5px" width="9" height="6" viewBox="0 0 9 6"><path d="M0.6 0.6L4.5 4.5L8.4 0.6" fill="none" stroke="#404040" stroke-width="1.05"/></svg></div>
<div class="t r" style="left:-93px;width:200px;top:264px;">Mietbasis</div>
<div class="f " style="left:112px;top:283px;width:150px;height:21px"><svg class="a" style="right:1px;top:4px" width="13" height="11"><use href="#binoS"/></svg></div>
<div class="t r" style="left:-93px;width:200px;top:286px;">Projekt</div>
<div class="f " style="left:112px;top:305px;width:150px;height:20px"></div>
<div class="t r" style="left:-93px;width:200px;top:308px;">Projektname</div>
<div class="f " style="left:112px;top:326px;width:150px;height:21px"><svg class="a" style="right:1px;top:4px" width="13" height="11"><use href="#binoS"/></svg></div>
<div class="t r" style="left:-93px;width:200px;top:329px;">Tarif</div>
<div class="f " style="left:362px;top:175px;width:150px;height:21px"><svg class="a" style="right:1px;top:4px" width="13" height="11"><use href="#binoS"/></svg><div class="a" style="left:2px;top:2px;width:128px;height:15px;background:#ffc8c8"></div></div>
<div class="t r" style="left:157px;width:200px;top:178px;">Kunde</div>
<div class="f " style="left:362px;top:197px;width:150px;height:20px"></div>
<div class="t r" style="left:157px;width:200px;top:200px;">Name</div>
<div class="f " style="left:362px;top:218px;width:50px;height:20px"></div>
<div class="f " style="left:411px;top:218px;width:101px;height:20px"><div class="a" style="left:0;top:0;bottom:0;width:1px;background:#7a7a7a"></div></div>
<div class="t r" style="left:157px;width:200px;top:221px;letter-spacing:-0.02px;">Titel/Vorname</div>
<div class="f " style="left:362px;top:240px;width:150px;height:20px"></div>
<div class="t r" style="left:157px;width:200px;top:243px;">z.Hd.</div>
<div class="f " style="left:362px;top:261px;width:150px;height:20px"></div>
<div class="t r" style="left:157px;width:200px;top:264px;letter-spacing:-0.45px;">Stra&szlig;e</div>
<div class="f " style="left:362px;top:283px;width:40px;height:20px"></div>
<div class="f " style="left:401px;top:283px;width:71px;height:20px"><div class="a" style="left:0;top:0;bottom:0;width:1px;background:#7a7a7a"></div></div>
<div class="f " style="left:472px;top:283px;width:40px;height:21px"><div class="t" style="left:2px;top:2px">&Ouml;st</div><svg class="a" style="right:1px;top:4px" width="13" height="11"><use href="#binoS"/></svg></div>
<div class="t r" style="left:157px;width:200px;top:286px;letter-spacing:0.2px;">PLZ/Ort/Land</div>
<div class="f " style="left:362px;top:305px;width:150px;height:20px"></div>
<div class="t r" style="left:157px;width:200px;top:308px;letter-spacing:-0.05px;">Zeichen Kunde</div>
<div class="f " style="left:587px;top:175px;width:150px;height:21px"><svg class="a" style="right:3.6px;top:7.5px" width="9" height="6" viewBox="0 0 9 6"><path d="M0.6 0.6L4.5 4.5L8.4 0.6" fill="none" stroke="#404040" stroke-width="1.05"/></svg></div>
<div class="t r" style="left:382px;width:200px;top:178px;letter-spacing:-0.29px;">Kategorie</div>
<div class="f " style="left:587px;top:197px;width:150px;height:20px"><svg class="a" style="right:1px;top:3px" width="13" height="11"><use href="#binoS"/></svg></div>
<div class="t r" style="left:382px;width:200px;top:200px;letter-spacing:-0.39px;">Vermittler</div>
<div class="f " style="left:587px;top:218px;width:150px;height:21px"><div class="t" style="left:2px;top:2px">Schmidt, Rudolf</div><svg class="a" style="right:1px;top:4px" width="13" height="11"><use href="#binoS"/></svg></div>
<div class="t r" style="left:382px;width:200px;top:221px;letter-spacing:-0.32px;">Bearbeiter</div>
<div class="f " style="left:587px;top:240px;width:150px;height:20px"><div class="dd" style="right:13px"></div><svg class="a" style="right:6px;top:7px" width="7" height="4" viewBox="0 0 7 4"><path d="M0 0H7L3.5 4Z" fill="#46608e"/></svg></div>
<div class="t r" style="left:382px;width:200px;top:243px;letter-spacing:-0.34px;">Lieferdatum</div>
<div class="cb" style="left:757px;top:179px"></div>
<div class="t" style="left:774px;top:179px;letter-spacing:-0.37px">Ust-befreit</div>
<div class="cb" style="left:757px;top:200px"></div>
<div class="t" style="left:774px;top:200px;">abgeschlossen</div>
<div class="cb" style="left:757px;top:218px"></div>
<div class="t" style="left:773px;top:218px;letter-spacing:-0.13px">Abrechnung nach Beginndatum</div>
<div class="f " style="left:112px;top:355px;width:100px;height:20px"><div class="t r" style="right:1.5px;top:2px">0</div></div>
<div class="t r" style="left:-93px;width:200px;top:358px;">Betreuungsfrequenz</div>
<div class="f " style="left:112px;top:377px;width:100px;height:20px"><div class="dd" style="right:13px"></div><svg class="a" style="right:6px;top:7px" width="7" height="4" viewBox="0 0 7 4"><path d="M0 0H7L3.5 4Z" fill="#46608e"/></svg></div>
<div class="t r" style="left:-93px;width:200px;top:380px;">Letzte Betreuung</div>
<div class="f " style="left:112px;top:398px;width:100px;height:20px"><div class="dd" style="right:13px"></div><svg class="a" style="right:6px;top:7px" width="7" height="4" viewBox="0 0 7 4"><path d="M0 0H7L3.5 4Z" fill="#46608e"/></svg></div>
<div class="t r" style="left:-93px;width:200px;top:401px;">abgerechnet bis</div>
<div class="f " style="left:112px;top:420px;width:100px;height:21px"><svg class="a" style="right:3.6px;top:7.5px" width="9" height="6" viewBox="0 0 9 6"><path d="M0.6 0.6L4.5 4.5L8.4 0.6" fill="none" stroke="#404040" stroke-width="1.05"/></svg></div>
<div class="t r" style="left:-93px;width:200px;top:423px;">Frequenz Abrechnung</div>
<div class="f " style="left:112px;top:441px;width:100px;height:20px"><div class="dd" style="right:13px"></div><svg class="a" style="right:6px;top:7px" width="7" height="4" viewBox="0 0 7 4"><path d="M0 0H7L3.5 4Z" fill="#46608e"/></svg></div>
<div class="t r" style="left:-93px;width:200px;top:444px;letter-spacing:-0.06px;">N&auml;chste Abrechnung</div>
<div class="f " style="left:112px;top:485px;width:100px;height:21px"><div class="t" style="left:2px;top:2px">Kreditkarte</div><svg class="a" style="right:3.6px;top:7.5px" width="9" height="6" viewBox="0 0 9 6"><path d="M0.6 0.6L4.5 4.5L8.4 0.6" fill="none" stroke="#404040" stroke-width="1.05"/></svg></div>
<div class="t r" style="left:-93px;width:200px;top:488px;">Zahlungsart</div>
<div class="f " style="left:112px;top:506px;width:100px;height:21px"><div class="t" style="left:2px;top:2px">Sofort</div><svg class="a" style="right:3.6px;top:7.5px" width="9" height="6" viewBox="0 0 9 6"><path d="M0.6 0.6L4.5 4.5L8.4 0.6" fill="none" stroke="#404040" stroke-width="1.05"/></svg></div>
<div class="t r" style="left:-93px;width:200px;top:509px;">Zahlungsziel</div>
<div class="f " style="left:112px;top:528px;width:100px;height:21px"><svg class="a" style="right:3.6px;top:7.5px" width="9" height="6" viewBox="0 0 9 6"><path d="M0.6 0.6L4.5 4.5L8.4 0.6" fill="none" stroke="#404040" stroke-width="1.05"/></svg></div>
<div class="t r" style="left:-93px;width:200px;top:531px;">Versandart</div>
<div class="cb" style="left:112px;top:559px"></div>
<div class="t" style="left:129px;top:559px;">Preise fixiert</div>
<div class="t" style="left:227px;top:353px;">Positionen</div>
<div class="a" style="left:227px;top:367px;width:998px;height:246px;background:#fff"></div>
<div class="gh" style="left:434px"></div>
<div class="gh" style="left:640px"></div>
<div class="gh" style="left:763px"></div>
<div class="gh" style="left:886px"></div>
<div class="gh" style="left:1041px"></div>
<div class="gh" style="left:1088px"></div>
<div class="gh" style="left:1148px"></div>
<div class="gh" style="left:1216px"></div>
<div class="t" style="left:233px;top:372px;">Artikel</div>
<div class="t" style="left:440px;top:372px;">Bezeichnung/Text</div>
<div class="t r" style="left:558px;width:200px;top:372px;">Anzahl</div>
<div class="t r" style="left:681px;width:200px;top:372px;">Einzelpreis Netto</div>
<div class="t r" style="left:836px;width:200px;top:372px;">Nettosumme Artikel</div>
<div class="t r" style="left:883px;width:200px;top:372px;">Von</div>
<div class="t r" style="left:943px;width:200px;top:372px;">Bis</div>
<div class="t r" style="left:1011px;width:200px;top:372px;">Rabatt</div>
<div class="t" style="left:238px;top:394px;color:#6d6d6d">Klicken Sie hier, um eine neue Zeile zu erzeugen</div>
<div class="t" style="left:227px;top:618px;letter-spacing:-0.33px">Positionssumme Netto</div>
<div class="f " style="left:227px;top:631px;width:90px;height:20px"><div class="t r" style="right:1.5px;top:2px">0,00&nbsp;&euro;</div></div>
<div class="t" style="left:227px;top:654px;">Summe Netto</div>
<div class="f " style="left:227px;top:667px;width:90px;height:20px"><div class="t r" style="right:1.5px;top:2px">0,00&nbsp;&euro;</div></div>
<div class="t" style="left:347px;top:618px;letter-spacing:-0.33px">Positionssumme Ust.</div>
<div class="f " style="left:347px;top:631px;width:90px;height:20px"><div class="t r" style="right:1.5px;top:2px">0,00&nbsp;&euro;</div></div>
<div class="t" style="left:347px;top:654px;">Summe Ust.</div>
<div class="f " style="left:347px;top:667px;width:90px;height:20px"><div class="t r" style="right:1.5px;top:2px">0,00&nbsp;&euro;</div></div>
<div class="t" style="left:472px;top:618px;letter-spacing:-0.33px">Positionssumme Brutto</div>
<div class="f " style="left:472px;top:631px;width:90px;height:20px"><div class="t r" style="right:1.5px;top:2px">0,00&nbsp;&euro;</div></div>
<div class="t" style="left:472px;top:654px;">Summe Brutto</div>
<div class="f " style="left:472px;top:667px;width:90px;height:20px"><div class="t r" style="right:1.5px;top:2px">0,00&nbsp;&euro;</div></div>
<div class="t" style="left:597px;top:618px;">Vertragssteuer</div>
<div class="f " style="left:597px;top:631px;width:90px;height:20px"><div class="t r" style="right:1px;top:2px">0,00&nbsp;%</div></div>
<div class="t" style="left:597px;top:654px;">Vertragssteuer</div>
<div class="f " style="left:597px;top:667px;width:90px;height:20px"><div class="t r" style="right:1.5px;top:2px">0,00&nbsp;&euro;</div></div>
<div class="f " style="left:112px;top:667px;width:100px;height:20px"><div class="t r" style="right:1px;top:2px">0,00&nbsp;%</div></div>
<div class="t r" style="left:-93px;width:200px;top:670px;">Rabatt</div>
<div class="cb" style="left:702px;top:631px"></div>
<div class="t" style="left:718px;top:631px;">Vertragssteuer abgerechnet</div>
<div class="a" id="frame2"></div><div class="a" id="frame"></div>
</body></html>
